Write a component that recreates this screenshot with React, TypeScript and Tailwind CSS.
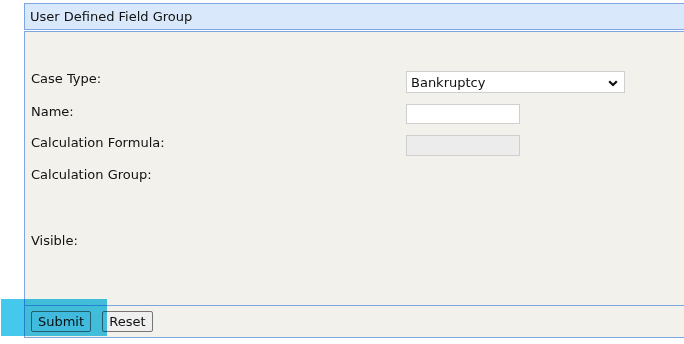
export default function App() {
  return (
    <div className="relative w-[684px] h-[344px] overflow-hidden bg-white text-[13px] leading-[16px] text-[#111] font-['DejaVu_Sans',Verdana,sans-serif]">
      {/* Header */}
      <div className="ml-[24px] mt-[3px] w-[700px] h-[27px] border border-[#7ea6e0] bg-[#dae8fc] px-[5px] flex items-center">
        User Defined Field Group
      </div>

      {/* Body */}
      <div className="ml-[24px] mt-[1px] w-[700px] border border-[#7ea6e0] bg-[#f2f1ec]">
        <div className="pl-[6px] pt-[39px] h-[273px]">
          <div className="flex h-[23px]">
            <div className="w-[375px]">Case Type:</div>
            <div className="relative w-[219px] h-[22px] border border-[#cfcfcf] bg-white flex items-center pl-[4px] pt-[2px]">
              Bankruptcy
              <svg className="absolute right-[6px] top-[8px]" width="10" height="7" viewBox="0 0 10 7">
                <polyline points="1.2,1.2 5,5 8.8,1.2" fill="none" stroke="#111" strokeWidth="2.2" />
              </svg>
            </div>
          </div>
          <div className="flex h-[21px] mt-[10px]">
            <div className="w-[375px]">Name:</div>
            <div className="w-[114px] h-[20px] border border-[#cfcfcf] bg-white" />
          </div>
          <div className="flex h-[22px] mt-[10px]">
            <div className="w-[375px]">Calculation Formula:</div>
            <div className="w-[114px] h-[21px] border border-[#cfcfcf] bg-[#ececec]" />
          </div>
          <div className="flex h-[16px] mt-[10px]">
            <div className="w-[375px]">Calculation Group:</div>
          </div>
          <div className="flex h-[16px] mt-[50px]">
            <div className="w-[375px]">Visible:</div>
          </div>
        </div>
        <div className="border-t border-[#7ea6e0] h-[32px] pl-[6px] pt-[5px] flex items-start gap-[11px]">
          <button className="w-[60px] h-[21px] border border-[#767676] rounded-[2px] bg-[#efefef] text-[13px] leading-[16px]">
            Submit
          </button>
          <button className="w-[51px] h-[21px] border border-[#767676] rounded-[2px] bg-[#efefef] text-[13px] leading-[16px]">
            Reset
          </button>
        </div>
      </div>

      {/* Highlight overlay */}
      <div className="absolute left-[1px] top-[299px] w-[106px] h-[37px] bg-[#44c8ec] mix-blend-multiply" />
    </div>
  );
}
